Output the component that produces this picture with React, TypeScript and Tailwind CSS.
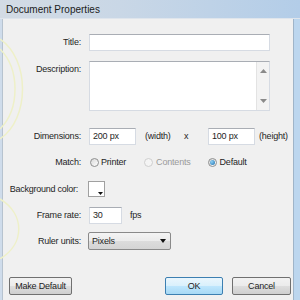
import React from "react";

const font = { fontFamily: '"Liberation Sans", Arial, sans-serif' };
const txt = "text-[9px] tracking-[-0.2px] leading-none text-[#1e1e1e]";

function Label({ children }: { children: React.ReactNode }) {
  return (
    <div className="w-[74px] shrink-0 text-right text-[9px] tracking-[-0.2px] leading-none text-[#1e1e1e] whitespace-nowrap">
      {children}
    </div>
  );
}

function Input({ value, w }: { value?: string; w: string }) {
  return (
    <div
      className={`${w} shrink-0 h-[17px] bg-white border border-[#d6dbe3] border-t-[#a9adb4] flex items-center pl-[3px] text-[9px] tracking-[-0.2px] text-[#1e1e1e]`}
    >
      {value}
    </div>
  );
}

function Radio({ checked, disabled }: { checked?: boolean; disabled?: boolean }) {
  return (
    <div
      className={`w-[9px] h-[9px] shrink-0 rounded-full border flex items-center justify-center ${
        disabled
          ? "border-[#cfcfcf] bg-[#f4f4f4]"
          : "border-[#8e8f8f] bg-[linear-gradient(135deg,#d8d8d8,#ffffff)]"
      }`}
    >
      {checked && (
        <div className="w-[5px] h-[5px] rounded-full bg-[radial-gradient(circle_at_35%_35%,#8fd0f5,#1a6fae)]" />
      )}
    </div>
  );
}

export default function App() {
  return (
    <div
      className="relative w-[300px] h-[300px] overflow-hidden bg-[#f0f0f0] flex flex-col"
      style={font}
    >
      {/* title bar */}
      <div className="h-[19px] shrink-0 flex items-center pl-[6px] bg-[linear-gradient(90deg,#d3dbe4_0%,#c9d7e6_40%,#b3cde8_100%)] border-b border-[#dfe5ec]">
        <span className="text-[10px] text-[#1b1b1b]">Document Properties</span>
      </div>
      <div className="flex flex-1">
        {/* left frame */}
        <div className="w-[3px] bg-[#cfdceb] border-r border-[#b7c3cf]" />
        <div className="flex-1 flex flex-col pl-[4px]">
          {/* Title */}
          <div className="mt-[15px] flex items-center gap-[8px] h-[17px]">
            <Label>Title:</Label>
            <Input w="w-[181px]" />
          </div>
          {/* Description */}
          <div className="mt-[10px] flex items-start gap-[8px]">
            <div className="pt-[4px]">
              <Label>Description:</Label>
            </div>
            <div className="w-[181px] h-[50px] bg-white border border-[#d6dbe3] border-t-[#a9adb4] flex justify-end">
              <div className="w-[13px] h-full bg-[#f3f3f3] border-l border-[#e3e3e3] flex flex-col items-center justify-between py-[7px]">
                <svg width="7" height="4" viewBox="0 0 7 4">
                  <path d="M0 4 L3.5 0 L7 4 Z" fill="#8a8a8a" />
                </svg>
                <svg width="7" height="4" viewBox="0 0 7 4">
                  <path d="M0 0 L3.5 4 L7 0 Z" fill="#8a8a8a" />
                </svg>
              </div>
            </div>
          </div>
          {/* Dimensions */}
          <div className="mt-[17px] flex items-center h-[17px]">
            <Label>Dimensions:</Label>
            <div className="ml-[8px]">
              <Input w="w-[47px]" value="200 px" />
            </div>
            <span className={`ml-[9px] w-[39px] ${txt}`}>(width)</span>
            <span className={`w-[24px] ${txt}`}>x</span>
            <Input w="w-[47px]" value="100 px" />
            <span className={`ml-[4px] ${txt} whitespace-nowrap`}>(height)</span>
          </div>
          {/* Match */}
          <div className="mt-[9px] flex items-center h-[16px]">
            <Label>Match:</Label>
            <div className="ml-[9px] flex items-center gap-[2px]">
              <Radio />
              <span className={txt}>Printer</span>
            </div>
            <div className="ml-[18px] flex items-center gap-[3px]">
              <Radio disabled />
              <span className="text-[9px] tracking-[-0.2px] leading-none text-[#9a9a9a]">Contents</span>
            </div>
            <div className="ml-[17px] flex items-center gap-[3px]">
              <Radio checked />
              <span className={txt}>Default</span>
            </div>
          </div>
          {/* Background color */}
          <div className="mt-[11px] flex items-center h-[16px]">
            <div className="w-[71px] shrink-0 text-right text-[9px] tracking-[-0.25px] leading-none text-[#1e1e1e] whitespace-nowrap flex justify-end">
              Background color:
            </div>
            <div className="ml-[10px] relative w-[17px] h-[16px] bg-white border border-[#a0a0a0]">
              <svg className="absolute right-[1px] bottom-[1px]" width="5" height="3" viewBox="0 0 5 3">
                <path d="M0 0 L5 0 L2.5 3 Z" fill="#111" />
              </svg>
            </div>
          </div>
          {/* Frame rate */}
          <div className="mt-[10px] flex items-center gap-[8px] h-[17px]">
            <Label>Frame rate:</Label>
            <Input w="w-[33px]" value="30" />
            <span className={txt}>fps</span>
          </div>
          {/* Ruler units */}
          <div className="mt-[8px] flex items-center gap-[8px] h-[18px]">
            <Label>Ruler units:</Label>
            <div className="-ml-[1px] w-[83px] h-[18px] rounded-[2px] border border-[#8a8a8a] bg-[linear-gradient(180deg,#f4f4f4_0%,#ebebeb_50%,#dcdcdc_51%,#d4d4d4_100%)] flex items-center justify-between pl-[3px] pr-[4px]">
              <span className={txt}>Pixels</span>
              <svg width="6" height="4" viewBox="0 0 6 4">
                <path d="M0 0 L6 0 L3 4 Z" fill="#111" />
              </svg>
            </div>
          </div>
          {/* Buttons */}
          <div className="mt-[27px] flex items-center h-[18px]">
            <button className={`ml-[2px] w-[63px] h-[18px] rounded-[2px] border border-[#707070] bg-[linear-gradient(180deg,#f2f2f2_0%,#ebebeb_50%,#dddddd_51%,#cfcfcf_100%)] ${txt} flex items-center justify-center`}>
              Make Default
            </button>
            <button className={`ml-[93px] w-[58px] h-[18px] rounded-[2px] border border-[#3c7fb1] bg-[linear-gradient(180deg,#eaf6fd_0%,#d9f0fc_50%,#bee6fd_51%,#a7d9f5_100%)] ${txt} flex items-center justify-center`}>
              OK
            </button>
            <button className={`ml-[9px] w-[59px] h-[18px] rounded-[2px] border border-[#707070] bg-[linear-gradient(180deg,#f2f2f2_0%,#ebebeb_50%,#dddddd_51%,#cfcfcf_100%)] ${txt} flex items-center justify-center`}>
              Cancel
            </button>
          </div>
        </div>
        {/* right frame */}
        <div className="w-[7px] bg-[#bcd6ee] border-l border-[#9fb4c8]" />
      </div>

      {/* faint watermark arcs */}
      <svg className="absolute left-0 top-[19px] pointer-events-none" width="40" height="240" viewBox="0 0 40 240">
        <g fill="none" stroke="#eef0c8" strokeWidth="1.5">
          <path d="M0 20 C30 40 30 100 0 120" />
          <path d="M0 30 C20 50 20 90 0 110" />
          <path d="M0 180 C25 195 25 225 0 240" />
        </g>
      </svg>
    </div>
  );
}
